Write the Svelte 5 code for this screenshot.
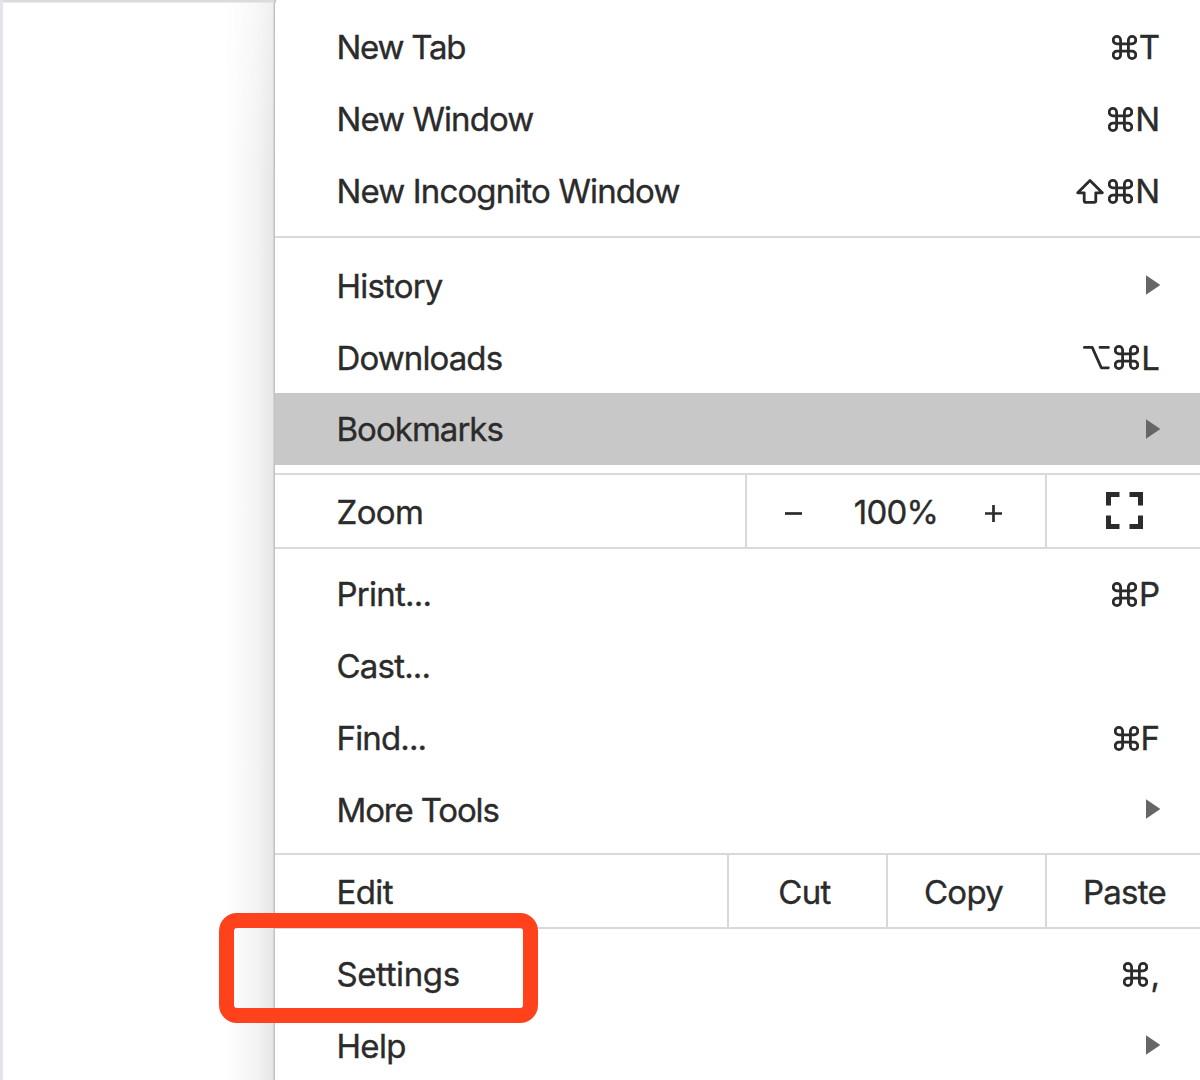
<script>
  const groups = [
    [
      { label: 'New Tab', tracking: -1.25, mods: ['cmd'], key: 'T' },
      { label: 'New Window', tracking: -0.95, mods: ['cmd'], key: 'N' },
      { label: 'New Incognito Window', tracking: -0.87, mods: ['shift', 'cmd'], key: 'N' }
    ],
    [
      { label: 'History', tracking: -0.8, sub: true },
      { label: 'Downloads', tracking: -0.9, mods: ['option', 'cmd'], key: 'L' },
      { label: 'Bookmarks', tracking: -0.97, sub: true, active: true }
    ],
    [
      { label: 'Print...', tracking: -0.75, mods: ['cmd'], key: 'P' },
      { label: 'Cast...', tracking: -0.8 },
      { label: 'Find...', tracking: -0.85, mods: ['cmd'], key: 'F' },
      { label: 'More Tools', tracking: -1.15, sub: true }
    ],
    [
      { label: 'Settings', tracking: -0.4, mods: ['cmd'], key: ',', marked: true },
      { label: 'Help', tracking: -0.65, sub: true }
    ]
  ];
</script>

{#snippet modifier(name)}
  {#if name === 'cmd'}
    <svg class="mod cmd" viewBox="0 0 25 25">
      <path d="M8.6 5.1A3.7 3.7 0 1 0 4.9 8.8H20.1A3.7 3.7 0 1 0 16.4 5.1V19.9A3.7 3.7 0 1 0 20.1 16.2H4.9A3.7 3.7 0 1 0 8.6 19.9Z" />
    </svg>
  {:else if name === 'shift'}
    <svg class="mod shift" viewBox="0 0 28 25">
      <path d="M14 1.6L26.3 13.8H19.8V21.6Q19.8 23.4 18 23.4H10Q8.2 23.4 8.2 21.6V13.8H1.7Z" />
    </svg>
  {:else}
    <svg class="mod option" viewBox="0 0 27 25">
      <path d="M1.4 2.4H9.2L18.3 22.8H25.4M17 2.4H25.4" />
    </svg>
  {/if}
{/snippet}

{#snippet rows(items)}
  <div class="group">
    {#each items as item}
      <div class="row" class:active={item.active}>
        <span class="label" class:marked={item.marked} style:letter-spacing="{item.tracking}px">{item.label}</span>
        {#if item.sub}
          <svg class="arrow" viewBox="0 0 15 20"><path d="M0 0L15 10L0 20Z" /></svg>
        {:else if item.key}
          <span class="shortcut">
            {#each item.mods as name}{@render modifier(name)}{/each}
            <span class="key">{item.key}</span>
          </span>
        {/if}
      </div>
    {/each}
  </div>
{/snippet}

<main class="page">
  <div class="menu">
    {@render rows(groups[0])}
    <hr />
    <div class="second">{@render rows(groups[1])}</div>
    <div class="bar zoom">
      <span class="label">Zoom</span>
      <div class="cell level">
        <svg class="sign" viewBox="0 0 17 17"><path d="M0 8.5H17" /></svg>
        <span class="percent">100%</span>
        <svg class="sign" viewBox="0 0 17 17"><path d="M0 8.5H17M8.5 0V17" /></svg>
      </div>
      <div class="cell last">
        <svg class="full" viewBox="0 0 37 37">
          <path d="M13.5 2.5H2.5V13.5M23.5 2.5H34.5V13.5M2.5 23.5V34.5H13.5M34.5 23.5V34.5H23.5" />
        </svg>
      </div>
    </div>
    <div class="third">{@render rows(groups[2])}</div>
    <div class="bar edit">
      <span class="label">Edit</span>
      <div class="cell cut">Cut</div>
      <div class="cell cut">Copy</div>
      <div class="cell last">Paste</div>
    </div>
    <div class="fourth">{@render rows(groups[3])}</div>
  </div>
</main>

<style>
  .page {
    box-sizing: border-box;
    width: 1200px;
    height: 1080px;
    overflow: hidden;
    padding-left: 272px;
    border-left: 3px solid #e4e4ea;
    background: linear-gradient(#dadadf, #dadadf) 0 0 / 100% 2.5px no-repeat,
      linear-gradient(rgba(255, 255, 255, 0.4), rgba(255, 255, 255, 0) 180px),
      linear-gradient(to right, #fff 222px, #fbfbfb 234px, #f3f3f3 254px, #e5e5e5 271px) #fff;
    font: 33px/72px Inter, 'Liberation Sans', sans-serif;
    color: #2b2b2b;
    -webkit-text-stroke: 0.35px #2b2b2b;
  }
  .menu {
    box-sizing: border-box;
    height: 1092px;
    margin-top: -4px;
    padding-top: 15px;
    background: #fff;
    border-radius: 9px 0 0 0;
    box-shadow: 0 0 0 1.5px #c2c2c2;
  }
  .row {
    display: flex;
    align-items: center;
    justify-content: space-between;
    height: 72px;
    padding: 0 40px 0 61.5px;
  }
  .row.active { background: #c8c8c8; }
  .label { position: relative; white-space: nowrap; letter-spacing: -0.6px; }
  .marked::before {
    content: '';
    position: absolute;
    left: -117.5px;
    top: -25px;
    box-sizing: border-box;
    width: 318.5px;
    height: 109.5px;
    border: 15.5px solid #ff421c;
    border-radius: 18px;
  }
  hr {
    height: 2px;
    margin: 9px 0 11px;
    border: 0;
    background: #d9d9d9;
  }
  .second { padding-bottom: 8px; }
  .second .row:not(.active) .label, .second .shortcut, .bar .label, .bar .cell { padding-top: 1px; }
  .third { padding: 9px 0 7px; }
  .fourth { padding-top: 9px; }
  .arrow { width: 14.5px; height: 20px; fill: #666; }
  .third .arrow, .fourth .arrow { margin-bottom: 2px; }
  .shortcut { display: flex; align-items: center; }
  .mod { fill: none; stroke: #2b2b2b; stroke-width: 2.8; height: 25px; stroke-linejoin: round; stroke-linecap: round; }
  .cmd { width: 25px; margin-right: 2px; }
  .shift { width: 28px; margin-right: 4px; }
  .option { width: 27px; margin-right: 4px; }
  .bar {
    box-sizing: border-box;
    display: flex;
    height: 76px;
    padding-left: 61.5px;
    border: solid #d9d9d9;
    border-width: 2px 0;
  }
  .bar .label { flex: 1; }
  .cell {
    box-sizing: border-box;
    display: flex;
    align-items: center;
    justify-content: center;
    width: 159px;
    border-left: 2px solid #d9d9d9;
    letter-spacing: -0.7px;
  }
  .cell.cut { padding-right: 6px; }
  .cell.last { width: 155px; padding-left: 2px; }
  .bar .level { width: 300px; justify-content: space-between; padding-left: 38px; padding-right: 43px; letter-spacing: -0.8px; }
  .percent { margin-left: 5px; }
  .sign { width: 17px; height: 17px; fill: none; stroke: #2b2b2b; stroke-width: 2.7; margin-top: 4px; }
  .full { width: 37px; height: 37px; margin-top: -3px; fill: none; stroke: #2b2b2b; stroke-width: 5; }
</style>
